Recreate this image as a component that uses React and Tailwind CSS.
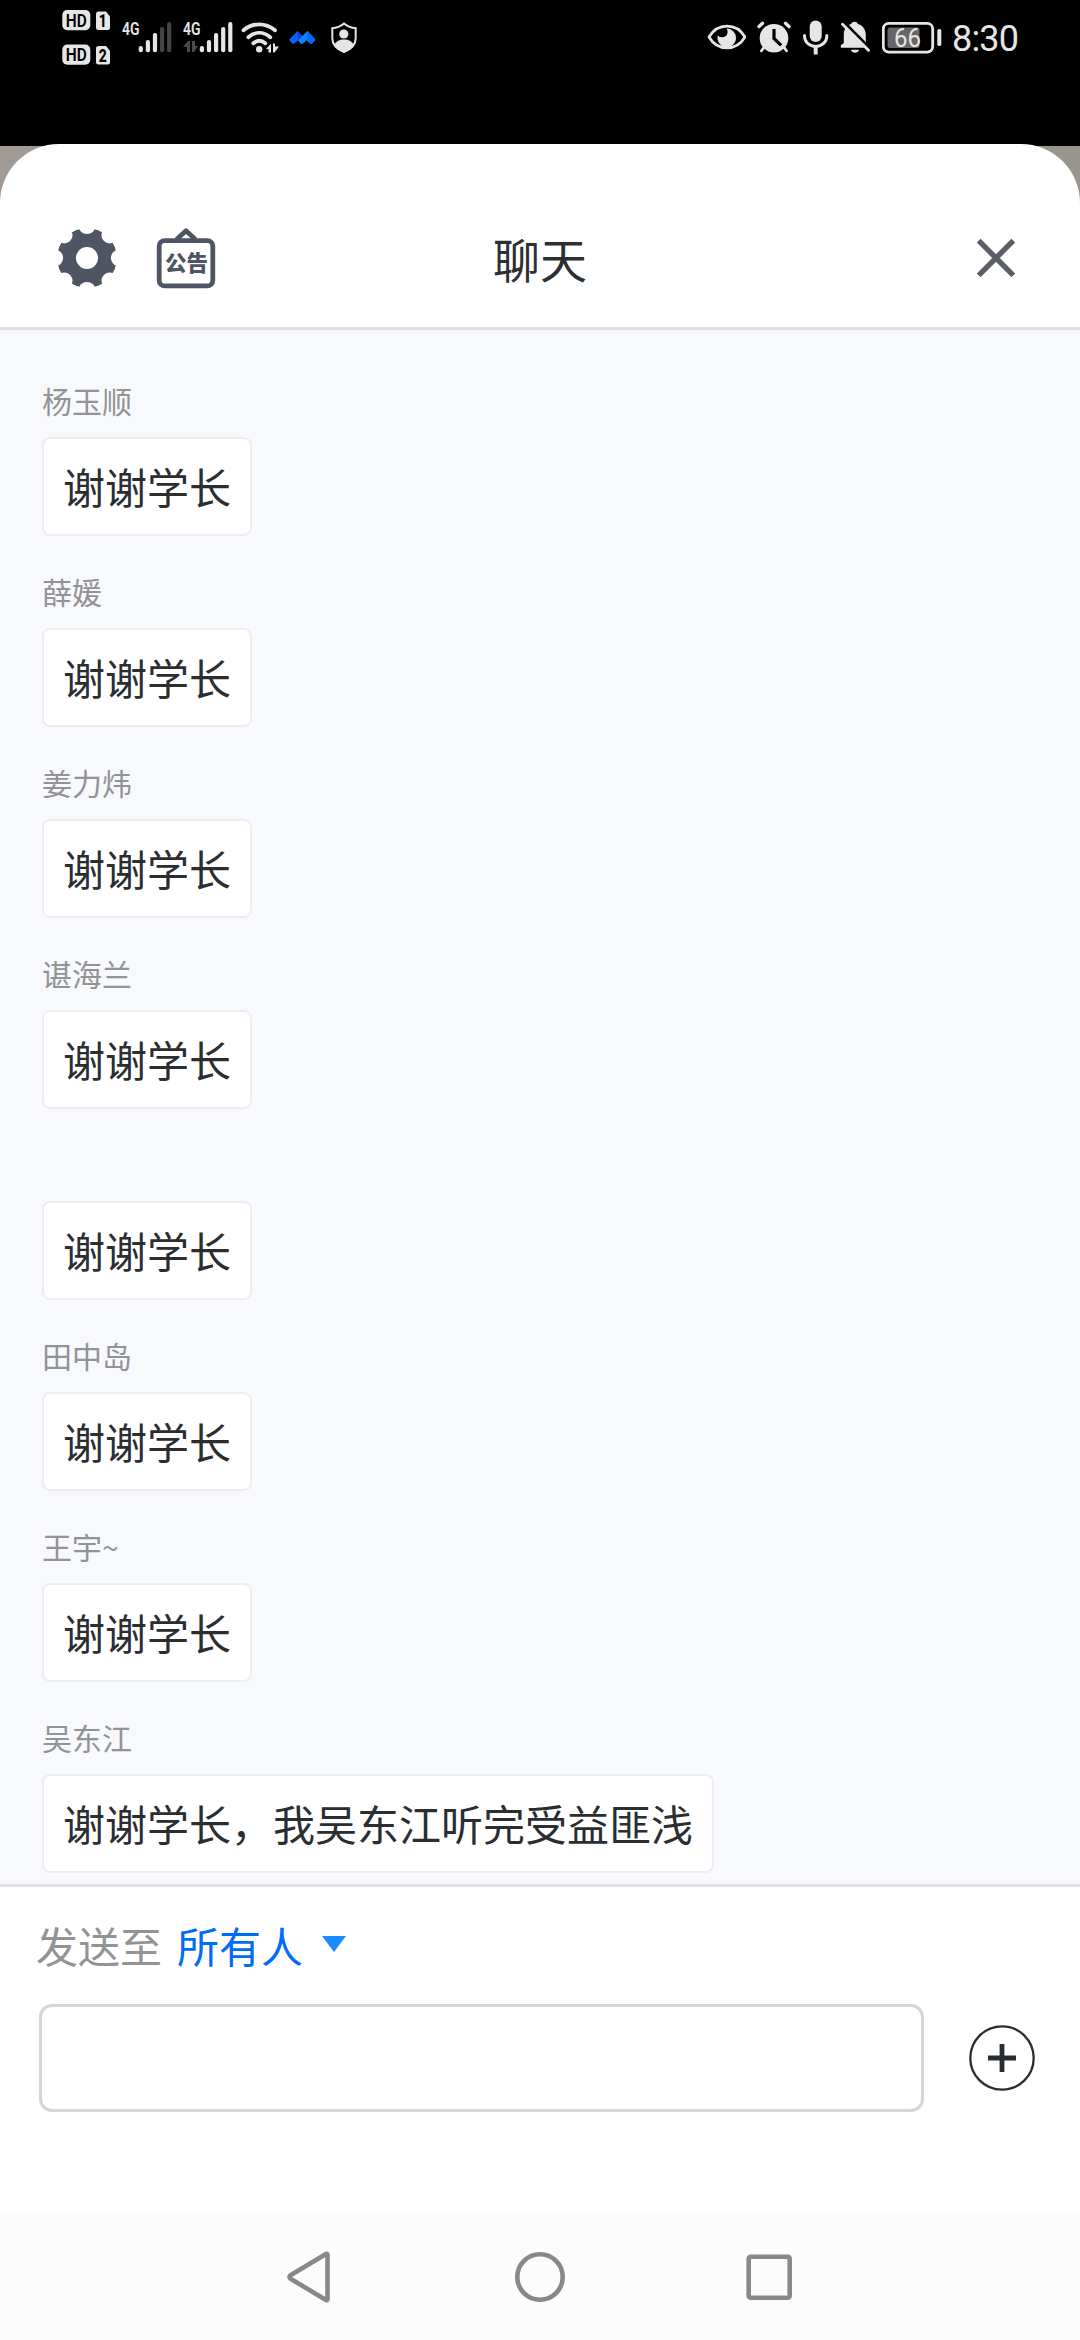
const messages = [
    { id: 1, name: '杨玉顺', text: '谢谢学长' },
    { id: 2, name: '薛媛', text: '谢谢学长' },
    { id: 3, name: '姜力炜', text: '谢谢学长' },
    { id: 4, name: '谌海兰', text: '谢谢学长' },
    { id: 5, name: '', text: '谢谢学长' },
    { id: 6, name: '田中岛', text: '谢谢学长' },
    { id: 7, name: '王宇~', text: '谢谢学长' },
    { id: 8, name: '吴东江', text: '谢谢学长，我吴东江听完受益匪浅' }
]

const barTops = [46, 40, 33, 27, 22]
const gearAngles = [0, 45, 90, 135, 180, 225, 270, 315]

function HdBadges() {
    return (
        <svg width="50" height="60" viewBox="62 8 50 60" fill="#e6e6e6">
            {[{ y: 10, n: '1' }, { y: 44.5, n: '2' }].map(({ y, n }) => (
                <g key={n}>
                    <rect x="62.3" y={y} width="28" height="20.3" rx="5" />
                    <text x="76.3" y={y + 16.8} textAnchor="middle" textLength="21" lengthAdjust="spacingAndGlyphs" fontSize="18.500" fontWeight="600" fill="#000" className="font-[Roboto,sans-serif]">HD</text>
                    <path d={`M98.5 ${y + 1.5}h7.5l4 5v11.500q0 2-2 2h-9.500q-2.500 0-2.500-2.500v-13.500q0-2.500 2.500-2.500z`} />
                    <text x="102.8" y={y + 17} textAnchor="middle" textLength="8" lengthAdjust="spacingAndGlyphs" fontSize="18" fontWeight="800" fill="#000" className="font-[Roboto,sans-serif]">{n}</text>
                </g>
            ))}
        </svg>
    )
}

// x is the left edge of the 4G label, start the first bar
function Signal({ x, start, level, arrows }) {
    return (
        <svg width={start + 34 - x} height="60" viewBox={`${x} 8 ${start + 34 - x} 60`} fill="#e6e6e6">
            <text x={x} y="35.5" textLength="17.500" lengthAdjust="spacingAndGlyphs" fontSize="19" fontWeight="600" className="font-[Roboto,sans-serif]">4G</text>
            {arrows && <path fill="#4a4a4a" d={`M${x} 47l5-6h2v11h-3v-5zM${x + 9} 41h3v5h3l-4 6h-2z`} />}
            {barTops.map((top, i) => (
                <rect key={top} x={start + i * 7.1} y={top} width="4.200" height={52.3 - top} rx="2" fill={i < level ? '#e6e6e6' : '#444'} />
            ))}
        </svg>
    )
}

function Wifi() {
    return (
        <svg width="38" height="60" viewBox="242 8 38 60" fill="none" stroke="#e6e6e6" strokeWidth="3.800" strokeLinecap="round">
            <path d="M244.500 30.300c9.500-8 22-8 31.500 0M249.300 37.200c7-5.800 15-5.800 22 0M254.300 43.200c4-3.200 8-3.200 12 0" />
            <circle cx="260.200" cy="49.200" r="3.200" fill="#e6e6e6" stroke="none" />
            <path d="M267 49l5-5.500v9h-2.500v-3.500zM274 43.500h2v3h4l-4.500 6H274z" fill="#e6e6e6" stroke="none" />
        </svg>
    )
}

function MeetingLogo() {
    return (
        <svg width="27" height="60" viewBox="290 8 27 60">
            <path d="M290 39.700l8.500-8.700 5.200 5.200-4.500 4-4 3.500h-1.700z" fill="#0f5cff" />
            <path d="M298.500 31l5.200 5.200-4.500 4.200z" fill="#0840d8" />
            <path d="M299 40.200l9.500-9.200 8 8.700-3.800 4h-1.500l-3.400-3.500-4.300 3.500h-1.700z" fill="#0c86ff" />
            <path d="M308.500 31l8 8.700-3.800 4h-1.500l-3.400-3.500z" fill="#0a66ff" />
        </svg>
    )
}

function Shield() {
    return (
        <svg width="27" height="60" viewBox="332 8 27 60">
            <path d="M345 23.500c3.500 3 7.500 4.500 11.700 4.700v10c0 6.500-4.500 11-11.700 13.800-7.200-2.800-11.700-7.300-11.700-13.800v-10c4.200-.2 8.200-1.700 11.700-4.700z" fill="none" stroke="#e6e6e6" strokeWidth="2" />
            <circle cx="344.800" cy="34" r="4.600" fill="#e6e6e6" />
            <path d="M335.300 45c2-4 5-5.500 9.700-5.500s7.700 1.500 9.700 5.500c-2 3.500-5.500 6-9.700 7.500-4.200-1.500-7.700-4-9.700-7.500z" fill="#e6e6e6" />
        </svg>
    )
}

function Eye() {
    return (
        <svg width="39" height="60" viewBox="706 8 39 60">
            <path d="M708 37c8.500-14.500 27.500-14.500 36 0-8.500 14.500-27.500 14.500-36 0z" fill="none" stroke="#e6e6e6" strokeWidth="2.700" strokeLinejoin="round" />
            <path d="M725.500 28.500a9.300 9.300 0 1 1-8.700 6.700 4.900 4.900 0 1 0 8.700-6.700z" fill="#e6e6e6" />
        </svg>
    )
}

function Alarm() {
    return (
        <svg width="34" height="60" viewBox="756 8 34 60" fill="none" stroke="#e6e6e6" strokeLinecap="round">
            <circle cx="773" cy="38.200" r="14.300" fill="#e6e6e6" stroke="none" />
            <path d="M758 26.500l3.500-3.200M788 26.500l-3.500-3.200" strokeWidth="3.400" />
            <path d="M762.500 48l-2 2.800M783.500 48l2 2.800" strokeWidth="2.800" />
            <path d="M773 30.500v8l6 5.700" stroke="#000" strokeWidth="3.200" strokeLinecap="square" />
        </svg>
    )
}

function Mic() {
    return (
        <svg width="26" height="60" viewBox="802 8 26 60" fill="none" stroke="#e6e6e6">
            <rect x="808.700" y="20.500" width="12" height="21.500" rx="6" fill="#e6e6e6" stroke="none" />
            <path d="M803.500 35.500c0 14.500 22.300 14.500 22.300 0" strokeWidth="3" strokeLinecap="round" />
            <path d="M814.700 46v8.500" strokeWidth="4" />
        </svg>
    )
}

function BellOff() {
    return (
        <svg width="31" height="60" viewBox="839 8 31 60" fill="#e6e6e6">
            <path d="M839.800 47.800v-2.500l3-2.300v-8c0-6.500 3-10 7.500-11 .5-3 6-3 6.500 0 4.500 1 8 5 8 11v8l2 4.800z" />
            <path d="M850 49.700h8c-.5 4-7.500 4-8 0z" />
            <path d="M843.500 23l26 26" stroke="#000" strokeWidth="3.200" />
            <path d="M841.500 24.200l26 26" stroke="#e6e6e6" strokeWidth="2.900" strokeLinecap="round" />
        </svg>
    )
}

function Battery() {
    return (
        <svg width="60" height="60" viewBox="881 8 60 60">
            <rect x="882.300" y="23.300" width="49.400" height="28.800" rx="5.500" fill="none" stroke="#e6e6e6" strokeWidth="2.800" />
            <rect x="886.500" y="27.500" width="32" height="20.500" rx="2.500" fill="#666" />
            <rect x="936.300" y="29" width="4" height="17" rx="1.800" fill="#e6e6e6" />
            <text x="906.500" y="46.500" textAnchor="middle" textLength="27" lengthAdjust="spacingAndGlyphs" fontSize="26" fill="#e6e6e6" className="font-[Roboto,sans-serif]">66</text>
        </svg>
    )
}

function StatusBar() {
    return (
        <div className="flex h-[146px] items-start justify-between bg-black px-[62px] pt-2">
            <div className="flex">
                <HdBadges />
                <div className="ml-[10px] flex"><Signal x={122} start={138.7} level={3} /></div>
                <div className="ml-[10px] flex"><Signal x={183} start={199.8} level={5} arrows /></div>
                <div className="ml-[8px] flex"><Wifi /></div>
                <div className="ml-[10px] flex"><MeetingLogo /></div>
                <div className="ml-[15px] flex"><Shield /></div>
            </div>
            <div className="flex">
                <Eye />
                <div className="ml-[11px] flex"><Alarm /></div>
                <div className="ml-[12px] flex"><Mic /></div>
                <div className="ml-[11px] flex"><BellOff /></div>
                <div className="ml-[11px] flex"><Battery /></div>
                <span className="ml-[10px] w-[66px] pt-[10px] font-[Roboto,sans-serif] text-[36px] leading-[42px] tracking-[-0.8px] whitespace-nowrap text-[#e6e6e6]">8:30</span>
            </div>
        </div>
    )
}

function GearIcon() {
    return (
        <svg width="60" height="60" viewBox="-30 -30 60 60">
            <mask id="gear">
                <circle r="30" fill="#fff" />
                {gearAngles.map((a) => (
                    <circle key={a} cy="-32.300" r="8.400" transform={`rotate(${a})`} fill="#000" />
                ))}
                <circle r="11" fill="#000" />
            </mask>
            <circle r="30" fill="#4f5562" mask="url(#gear)" />
        </svg>
    )
}

function NoticeIcon() {
    return (
        <svg width="60" height="62" viewBox="156 226 60 62" fill="none" stroke="#4f5562" strokeWidth="4.800">
            <rect x="159.200" y="239.700" width="53.600" height="45.200" rx="5.500" />
            <path d="M176.500 238.500l9.500-8.700 9.500 8.700" strokeLinejoin="round" />
            <text x="186.500" y="270" textAnchor="middle" fontSize="21.500" fontWeight="900" fill="#4f5562" stroke="none" className="font-['Noto_Sans_CJK_SC',sans-serif]">公告</text>
        </svg>
    )
}

function Header() {
    return (
        <header className="grid h-[186px] grid-cols-3 items-center rounded-t-[59px] border-b-3 border-[#dfe1e4] bg-white pt-[45px] pr-[64px] pl-[57px]">
            <div className="flex items-center gap-[39px]">
                <GearIcon />
                <NoticeIcon />
            </div>
            <h1 className="pl-[7px] text-center text-[47px] leading-[60px] text-[#2d3033]">聊天</h1>
            <svg className="justify-self-end" width="40" height="40" viewBox="0 0 40 40" stroke="#5b5e67" strokeWidth="5.400">
                <path d="M2.700 2.700l34.600 34.600M37.300 2.700l-34.600 34.600" />
            </svg>
        </header>
    )
}

function Message({ name, text }) {
    return (
        <div className="flex h-[191px] flex-col items-start">
            <div className="h-[56px] text-[30px] leading-[38px] text-[#919395]">{name}</div>
            <div className="h-[99px] rounded-lg border-2 border-[#edeef1] bg-white px-[19px] text-[42px] leading-[94px] whitespace-nowrap text-[#2b2e31]">{text}</div>
        </div>
    )
}

function Composer() {
    return (
        <div className="h-[330px] border-t-3 border-[#dfe1e4] bg-white">
            <div className="flex h-[117px] items-center pb-0.5 pl-9 text-[42px] leading-[60px]">
                <span className="text-[#919496]">发送至</span>
                <span className="ml-[15px] text-[#006cf9]">所有人</span>
                <svg className="mb-0.5 ml-[19px]" width="24" height="16" viewBox="0 0 24 16" fill="#1a8cff">
                    <path d="M0 0h24L12 16z" />
                </svg>
            </div>
            <div className="flex items-center pl-[39px]">
                <div className="h-[108px] w-[885px] rounded-[13px] border-3 border-[#d3d6db]" />
                <svg className="ml-[44px]" width="68" height="68" viewBox="-34 -34 68 68" fill="none" stroke="#2a2d30">
                    <circle r="31.700" strokeWidth="2.300" />
                    <path d="M-14 0h28M0-14v28" strokeWidth="4.800" />
                </svg>
            </div>
        </div>
    )
}

function NavBar() {
    return (
        <nav className="flex h-[126px] items-center justify-center bg-[#fcfcfc]">
            <svg width="510" height="54" viewBox="285 2250 510 54" fill="none" stroke="#888" strokeWidth="4.600" strokeLinejoin="round">
                <path d="M327.500 2255v44q0 1.500-1.500 1l-35.500-21.300q-2-1.700 0-3.400l35.500-21.300q1.500-.5 1.500 1z" />
                <circle cx="540" cy="2277" r="22.700" />
                <rect x="748.700" y="2256.700" width="41" height="41" rx="2" />
            </svg>
        </nav>
    )
}

export default function App() {
    return (
        <div className="flex h-[2340px] w-[1080px] flex-col overflow-hidden bg-linear-to-r from-[#a29a94] to-[#98958d] font-['Noto_Sans_CJK_SC',sans-serif]">
            <StatusBar />
            <div className="-mt-0.5 flex flex-1 flex-col">
                <Header />
                <main className="h-[1554px] overflow-hidden bg-[#f8f9fc] pt-[51px] pl-[42px]">
                    {messages.map((m) => (
                        <Message key={m.id} name={m.name} text={m.text} />
                    ))}
                </main>
                <Composer />
                <NavBar />
            </div>
        </div>
    )
}
